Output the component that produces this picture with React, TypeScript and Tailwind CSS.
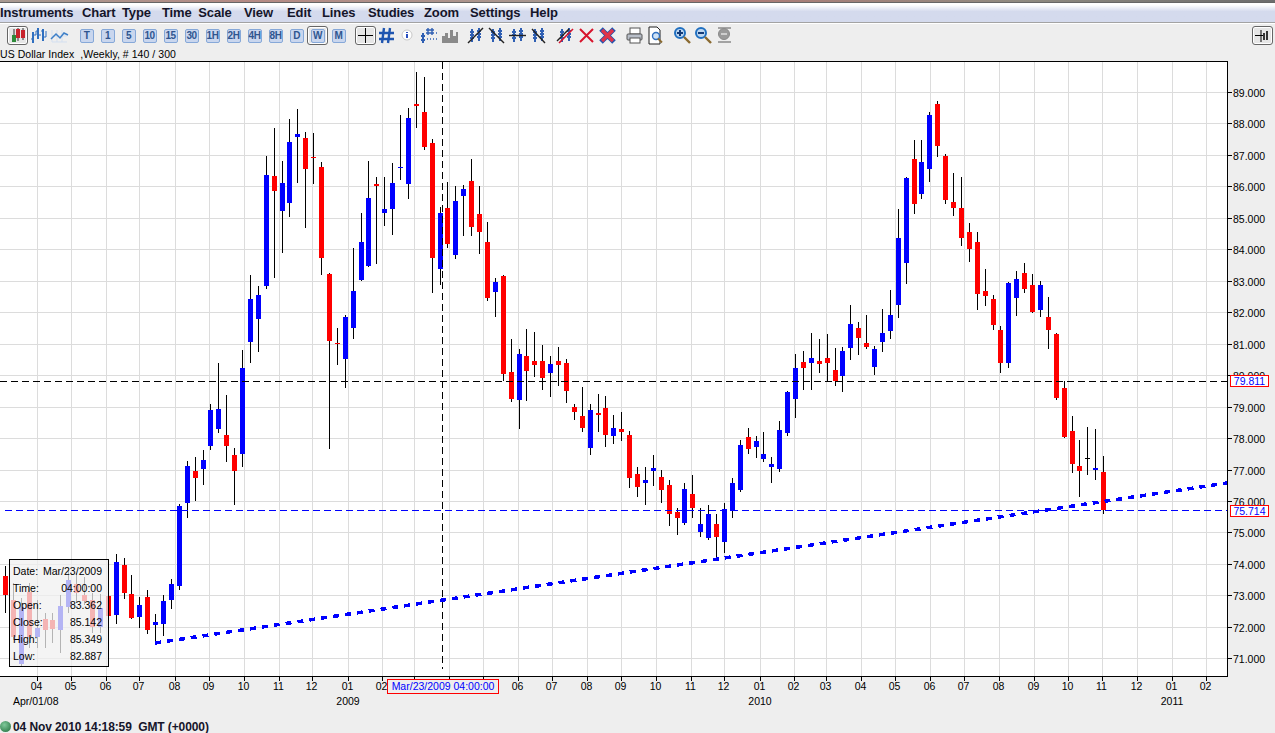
import React from 'react';

type Candle = ['r' | 'b' | 'k', number, number, number, number];

// colour, wick top, body top, body bottom, wick bottom (pixel rows of the picture)
const candles: Candle[] = [
  ['r',566,576,595,613],['r',583,600,637,640],['b',598,607,664,666],['r',583,592,637,648],['b',600,628,637,648],
  ['r',613,619,630,648],['r',613,620,629,643],['b',595,606,630,653],['b',570,580,607,613],['r',573,584,593,603],
  ['r',577,595,601,605],['r',593,600,627,633],['b',594,608,627,633],['r',590,596,616,620],['b',554,562,615,624],
  ['r',558,565,593,599],['r',575,594,618,619],['b',597,605,617,628],['r',590,597,630,634],['b',614,622,625,645],
  ['b',595,601,624,636],['b',579,584,600,609],['b',504,506,586,590],['b',461,466,503,518],['r',457,471,478,501],
  ['b',450,460,469,485],['b',404,410,446,450],['b',363,409,429,433],['r',395,435,446,462],['r',448,455,471,505],
  ['b',350,368,454,467],['b',275,299,342,363],['b',286,295,319,352],['b',156,175,286,289],['r',128,176,191,278],
  ['b',161,183,211,253],['b',119,142,203,217],['b',109,134,137,183],['r',132,138,169,228],['r',133,157,158,184],
  ['r',162,167,258,275],['r',273,274,341,449],['r',328,343,344,365],['b',315,317,359,388],['b',248,291,328,339],
  ['b',213,242,280,281],['b',161,198,266,267],['r',177,184,186,264],['b',177,209,213,226],['b',163,183,209,235],
  ['b',115,167,168,180],['b',108,118,184,199],['r',72,104,106,128],['r',77,112,147,150],['r',139,143,258,293],
  ['b',207,213,269,285],['r',182,208,244,248],['b',186,201,255,259],['b',185,189,196,236],['r',159,181,227,236],
  ['r',186,214,232,254],['r',222,242,298,301],['b',278,282,292,317],['r',275,276,374,381],['r',339,372,399,402],
  ['b',349,354,400,429],['r',329,356,371,401],['r',332,361,365,377],['r',345,361,378,390],['b',356,364,373,397],
  ['r',347,361,365,386],['r',359,363,391,403],['r',404,407,412,420],['r',387,416,428,432],['b',404,410,448,455],
  ['r',394,413,415,432],['r',396,408,435,447],['b',415,428,436,444],['r',412,429,432,441],['r',431,435,478,488],
  ['r',467,474,487,497],['b',467,480,483,505],['b',455,468,471,486],['r',470,477,490,503],['r',480,485,514,526],
  ['r',508,512,518,535],['b',483,489,523,525],['r',475,494,508,518],['b',508,524,532,537],['b',505,514,538,540],
  ['r',514,524,537,560],['b',503,509,542,553],['b',478,483,511,518],['b',440,445,490,492],['r',428,437,449,454],
  ['b',436,441,447,458],['b',432,454,459,462],['b',457,464,467,483],['b',421,430,469,472],['b',391,392,433,436],
  ['b',354,368,399,418],['r',351,362,368,390],['b',333,358,363,390],['r',339,361,364,373],['r',334,358,363,381],
  ['r',348,370,381,386],['b',347,351,376,392],['b',305,324,348,360],['r',322,328,338,355],['r',315,343,347,349],
  ['b',346,349,367,375],['b',309,333,342,352],['b',290,315,331,339],['b',209,238,305,318],['b',177,178,263,284],
  ['r',140,159,204,214],['b',140,162,194,199],['b',112,115,169,182],['r',101,104,146,157],['r',154,156,200,204],
  ['r',173,202,208,216],['r',177,208,238,246],['r',223,232,249,262],['r',232,242,294,310],['r',269,291,296,306],
  ['r',295,299,325,330],['r',326,330,363,373],['b',282,283,363,368],['b',271,279,298,316],['r',263,273,289,293],
  ['r',274,285,312,313],['b',281,285,310,317],['r',297,317,330,349],['r',333,334,398,400],['r',381,388,437,438],
  ['r',416,431,464,473],['r',440,466,471,497],['k',427,458,459,475],['b',429,468,470,480],['r',456,472,510,514],
];

const gridX = [37,71,106,139,175,209,244,279,312,348,382,414,449,483,518,552,587,621,656,691,724,760,794,826,861,895,930,964,999,1034,1068,1102,1137,1172,1206];
const gridY = [92,123,155,186,218,249,281,312,344,375,407,438,470,501,532,564,595,627,658];
const months: [number, string][] = [
  [37,'04'],[71,'05'],[106,'06'],[139,'07'],[175,'08'],[209,'09'],[244,'10'],[279,'11'],[312,'12'],[348,'01'],[382,'02'],
  [518,'06'],[552,'07'],[587,'08'],[621,'09'],[656,'10'],[691,'11'],[724,'12'],[760,'01'],[794,'02'],[826,'03'],[861,'04'],
  [895,'05'],[930,'06'],[964,'07'],[999,'08'],[1034,'09'],[1068,'10'],[1102,'11'],[1137,'12'],[1172,'01'],[1206,'02'],
];
const menus = [
  ['Instruments', 'w-[82px]'],
  ['Chart Type', 'w-[80px]'],
  ['Time Scale', 'w-[82px]'],
  ['View', 'w-[43px]'],
  ['Edit', 'w-[35px]'],
  ['Lines', 'w-[46px]'],
  ['Studies', 'w-[56px]'],
  ['Zoom', 'w-[46px]'],
  ['Settings', 'w-[60px]'],
  ['Help', 'w-[40px]'],
];
const periods = ['T', '1', '5', '10', '15', '30', '1H', '2H', '4H', '8H', 'D', 'W', 'M'];
const legend = [
  ['Date:', 'Mar/23/2009'],
  ['Time:', '04:00:00'],
  ['Open:', '83.362'],
  ['Close:', '85.142'],
  ['High:', '85.349'],
  ['Low:', '82.887'],
];

const colours = { r: '#ff0000', b: '#0000ff', k: '#000000' };

const Icon: React.FC<{ children: React.ReactNode }> = ({ children }) => (
  <div className="flex h-[19px] w-[21px] shrink-0 items-center justify-center">
    <svg width="21" height="19" viewBox="0 0 21 19" fill="none">
      {children}
    </svg>
  </div>
);

const Selected: React.FC<{ children: React.ReactNode }> = ({ children }) => (
  <div className="flex h-[19px] w-[21px] shrink-0 items-center justify-center rounded-[3px] border border-[#666666] bg-[#e6e6e6] shadow-[inset_0_0_0_1px_#ffffff]">
    {children}
  </div>
);

const Period: React.FC<{ label: string }> = ({ label }) => (
  <div className="flex h-[14px] w-[14px] items-center justify-center rounded-[2px] border border-[#86a8d8] bg-[#c9d6ee] text-[10px] leading-none font-bold tracking-[-0.5px] text-[#2f5590]">
    {label}
  </div>
);

// the four drawing tools and the two delete tools share these blue bars
const Bars = () => (
  <path d="M7 3v13M14 2v13M5 6h4M5 9h4M5 12h4M12 5h4M12 8h4M12 11h4" stroke="#2f5fb3" strokeWidth="2" />
);

const Lens: React.FC<{ sign: 'plus' | 'minus' }> = ({ sign }) => (
  <>
    <circle cx="8" cy="7" r="5" fill="#bcd6f0" stroke="#1f6fc0" strokeWidth="2" />
    <path d="M12 11l6 6" stroke="#8a6a30" strokeWidth="2.4" />
    <path d={sign === 'plus' ? 'M5 7h6M8 4v6' : 'M5 7h6'} stroke="#123a78" strokeWidth="2" />
  </>
);

const Toolbar = () => (
  <div className="flex h-[23px] items-center pl-[7px] pr-[2px]">
    <Selected>
      <svg width="17" height="17" viewBox="0 0 17 17">
        <path d="M5 2v13M9 1v13M14 1v12" stroke="#333333" />
        <rect x="3" y="8" width="4" height="7" fill="#2e8b3a" />
        <rect x="7" y="2" width="4" height="9" fill="#c8232c" />
        <rect x="12" y="3" width="4" height="8" fill="#c8232c" />
      </svg>
    </Selected>
    <Icon>
      <path d="M5 6v11M10 2v11M15 3v12" stroke="#2f6fc0" strokeWidth="2" />
      <path d="M3 13h2M5 9h3M8 5h2M10 9h3M13 5h2M15 11h3M8 9v-4M18 5v6" stroke="#2f6fc0" />
    </Icon>
    <Icon>
      <path d="M3 4v12M3 16h15M3 10h15M8 4v12M13 4v12" stroke="#d3dff0" />
      <path d="M2 13l5-5 4 4 4-5 4 2" stroke="#3d7fc8" strokeWidth="1.5" />
    </Icon>
    <div className="flex pl-[6px]">
      {periods.map((p) => {
        const button = <Period key={p} label={p} />;
        return (
          <div key={p} className="flex h-[19px] w-[21px] shrink-0 items-center justify-center">
            {p === 'W' ? <Selected>{button}</Selected> : button}
          </div>
        );
      })}
    </div>
    <div className="flex pl-[6px]">
      <Selected>
        <svg width="17" height="17" viewBox="0 0 17 17">
          <path d="M8.5 1v15M1 8.5h15" stroke="#000000" />
        </svg>
      </Selected>
      <Icon>
        <path d="M8 2l-2 15M14 2l-2 15M3 7h15M3 13h15" stroke="#1f55b0" strokeWidth="2.4" />
      </Icon>
      <Icon>
        <circle cx="10" cy="9" r="5" fill="#ffffff" stroke="#c8c8c8" />
        <path d="M10 6v1M10 8v4" stroke="#2a4fc0" strokeWidth="2" />
      </Icon>
      <Icon>
        <path d="M5 7v10M3 10h4M3 14h4" stroke="#2f5fb3" strokeWidth="2" />
        <path d="M10 2v7M14 2v7M8 4h8M8 7h8M9 13h1M12 13h1M15 13h1M18 13h1M18 7h1" stroke="#2f5fb3" strokeWidth="1.4" />
      </Icon>
      <Icon>
        <path d="M3 17v-7h3v-3h3v5h2V4h3v6h3V6h2v11z" fill="#8a8a8a" />
      </Icon>
    </div>
    <div className="flex pl-[5px]">
      <Icon>
        <Bars />
        <path d="M3 17L18 2" stroke="#222222" strokeWidth="1.4" />
      </Icon>
      <Icon>
        <Bars />
        <path d="M3 2l15 15" stroke="#222222" strokeWidth="1.4" />
      </Icon>
      <Icon>
        <Bars />
        <path d="M2 9.5h17" stroke="#222222" strokeWidth="1.4" />
      </Icon>
      <Icon>
        <Bars />
        <path d="M4 3l13 14" stroke="#222222" strokeWidth="1.4" />
      </Icon>
    </div>
    <div className="flex pl-[6px]">
      <Icon>
        <Bars />
        <path d="M2 15L14 3" stroke="#222222" strokeWidth="1.4" />
        <path d="M4 17L18 3" stroke="#d8142c" strokeWidth="1.6" />
      </Icon>
      <Icon>
        <path d="M4 3l13 13M17 3L4 16" stroke="#d8142c" strokeWidth="2" />
      </Icon>
      <Icon>
        <path d="M4 3l13 13M17 3L4 16" stroke="#1f55b0" strokeWidth="5" />
        <path d="M5 4l11 11M16 4L5 15" stroke="#e0344a" strokeWidth="3.4" />
      </Icon>
    </div>
    <div className="flex pl-[6px]">
      <Icon>
        <rect x="6" y="2" width="10" height="6" fill="#ffffff" stroke="#555555" />
        <rect x="3" y="8" width="15" height="6" rx="1" fill="#b8bec8" stroke="#555555" />
        <rect x="6" y="12" width="10" height="5" fill="#ffffff" stroke="#555555" />
      </Icon>
      <Icon>
        <path d="M4 1h8l3 3v14H4z" fill="#ffffff" stroke="#222222" />
        <circle cx="11" cy="10" r="3.5" fill="#cfe2f5" stroke="#2f6fc0" strokeWidth="1.4" />
        <path d="M13 12.5l4 4" stroke="#8a6a30" strokeWidth="1.8" />
      </Icon>
    </div>
    <div className="flex pl-[6px]">
      <Icon>
        <Lens sign="plus" />
      </Icon>
      <Icon>
        <Lens sign="minus" />
      </Icon>
      <Icon>
        <circle cx="10" cy="8" r="5.5" fill="#9a9a9a" stroke="#8a8a8a" />
        <path d="M7 8h6" stroke="#cfcfcf" strokeWidth="2" />
        <path d="M4 2h13M4 16h13" stroke="#8a8a8a" strokeWidth="1.4" />
      </Icon>
    </div>
    <div className="ml-auto">
      <Selected>
        <svg width="17" height="17" viewBox="0 0 17 17">
          <path d="M1 8.5h8M7 3v12" stroke="#000000" />
          <path d="M10 6v7M13 4v9" stroke="#333333" strokeWidth="2" />
        </svg>
      </Selected>
    </div>
  </div>
);

const Chart = () => (
  <svg width="1275" height="659" viewBox="0 61 1275 659" className="block">
    <rect x="0" y="62" width="1227" height="614" fill="#ffffff" />
    <g shapeRendering="crispEdges">
      {gridX.map((x) => (
        <path key={x} d={`M${x + 0.5} 62V676`} stroke="#dcdcdc" />
      ))}
      {gridY.map((y) => (
        <path key={y} d={`M0 ${y + 0.5}H1227`} stroke="#dcdcdc" />
      ))}
      {candles.map(([c, top, open, close, bottom], i) => {
        const x = Math.round(5 + 7.9 * i);
        return (
          <g key={i}>
            <rect x={x} y={top} width="1" height={bottom - top} fill="#000000" />
            <rect x={x - 2} y={open} width="5" height={close - open} fill={colours[c]} />
          </g>
        );
      })}
      <path d="M0 381.5H1227" stroke="#000000" strokeDasharray="7 4" />
      <path d="M5 510.5H1227" stroke="#0000ff" strokeDasharray="7 4" />
      <path d="M442.5 62V669" stroke="#000000" strokeDasharray="7 4" />
      <path d="M155 643L1227 483" stroke="#0000ff" strokeWidth="3.5" strokeDasharray="6 6" />
      <path d="M0 61.5H1228M1227.5 61V676M0 676H1228" stroke="#000000" />
      {gridX.map((x) => (
        <path key={x} d={`M${x + 0.5} 676V681`} stroke="#000000" />
      ))}
      {gridY.map((y) => (
        <path key={y} d={`M1227 ${y + 0.5}H1232`} stroke="#000000" />
      ))}
    </g>
    <g fontSize="10.5" fill="#000000" fontFamily="'Liberation Sans', Arial, sans-serif">
      {gridY.map((y, i) => (
        <text key={y} x="1233" y={y + 5}>
          {(89 - i).toFixed(3)}
        </text>
      ))}
      {months.map(([x, m]) => (
        <text key={x} x={x - 0.5} y="690" textAnchor="middle">
          {m}
        </text>
      ))}
      <text x="13" y="705">Apr/01/08</text>
      <text x="348" y="705" textAnchor="middle">2009</text>
      <text x="760" y="705" textAnchor="middle">2010</text>
      <text x="1172" y="705" textAnchor="middle">2011</text>
    </g>
  </svg>
);

const PriceTag: React.FC<{ value: string; className: string }> = ({ value, className }) => (
  <div className={`absolute left-[1230px] flex h-[12px] w-[39px] items-center justify-center border border-[#ff0000] bg-white text-[10.5px] leading-none text-[#0000ff] ${className}`}>
    {value}
  </div>
);

export default function App() {
  return (
    <div className="flex h-[733px] w-[1275px] flex-col overflow-hidden bg-[#eeeeee] font-['Liberation_Sans',Arial,sans-serif] text-black">
      <div className="h-[2px] bg-[linear-gradient(90deg,#a89a92,#b58a84_20%,#a89a92_45%,#b27a76_55%,#8f8a80_80%,#6d6d6d)]" />
      <div className="h-[1px] bg-[#666666]" />
      <div className="flex h-[19px] items-center bg-gradient-to-b from-white from-10% to-[#d4daed] to-45% pt-[1px] text-[13px] font-bold tracking-[-0.1px] [word-spacing:3px] text-[#15152a]">
        {menus.map(([m, w]) => (
          <span key={m} className={`shrink-0 ${w}`}>{m}</span>
        ))}
      </div>
      <div className="h-[1px] bg-[#a3a3a3]" />
      <div className="h-[1px] bg-white" />
      <Toolbar />
      <div className="h-[14px] text-[10.5px] leading-[14px] tracking-[0.05px]">US Dollar Index&nbsp; ,Weekly, # 140 / 300</div>
      <div className="relative h-[659px] shrink-0">
        <Chart />
        <div className="absolute left-[9px] top-[498px] flex h-[108px] w-[100px] flex-col border border-black bg-[#f0f0f0]/75 pt-[3px] pr-[6px] pl-[3px] text-[10.5px] leading-[17px]">
          {legend.map(([k, v]) => (
            <div key={k} className="flex justify-between">
              <span>{k}</span>
              <span>{v}</span>
            </div>
          ))}
        </div>
        <PriceTag value="79.811" className="top-[314px]" />
        <PriceTag value="75.714" className="top-[444px]" />
        <div className="absolute left-[387px] top-[618px] flex h-[15px] w-[112px] items-center justify-center border border-[#ff0000] bg-[#eeeeee] text-[10.5px] leading-none text-[#0000ff]">
          Mar/23/2009 04:00:00
        </div>
      </div>
      <div className="flex h-[13px] items-start">
        <div className="mt-[1px] h-[11px] w-[11px] shrink-0 rounded-full bg-[radial-gradient(circle_at_40%_35%,#7fc99a,#1f6b3a)]" />
        <span className="mt-[1px] ml-[2px] text-[12px] leading-[12px] font-bold tracking-[-0.1px] whitespace-pre text-[#15152a]">04 Nov 2010 14:18:59  GMT (+0000)</span>
      </div>
    </div>
  );
}
